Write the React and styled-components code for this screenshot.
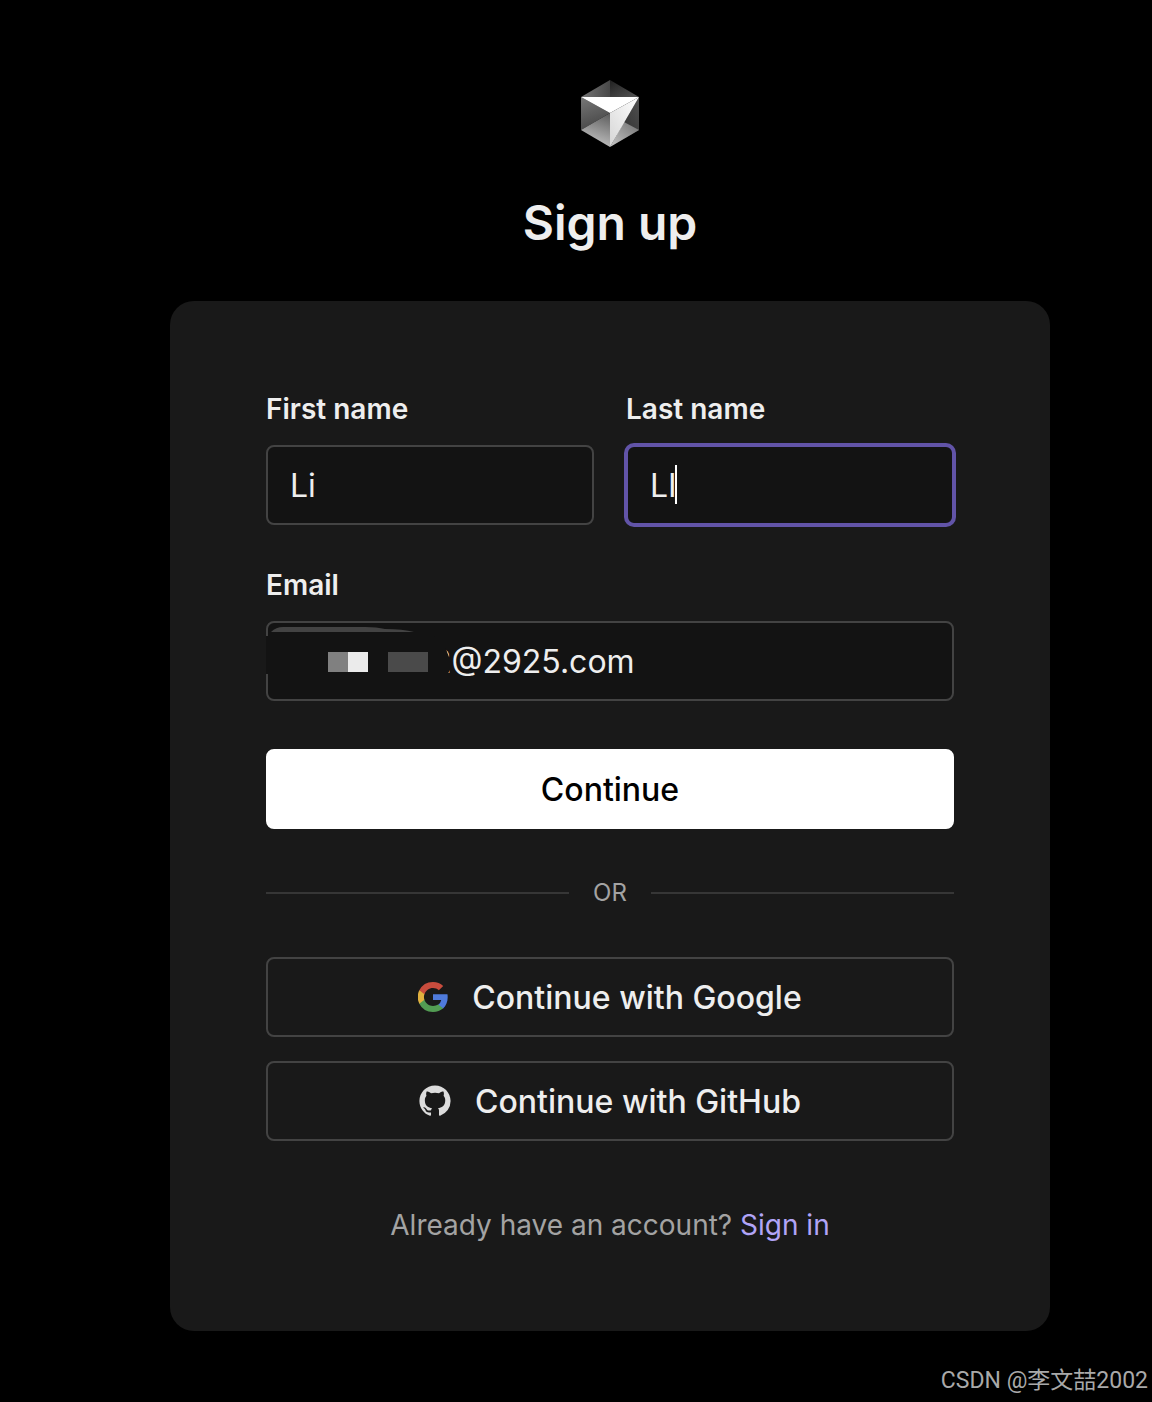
import { useState } from 'react';
import styled, { createGlobalStyle, css } from 'styled-components';

const GlobalStyle = createGlobalStyle`
   * {
      box-sizing: border-box;
   }
   body {
      margin: 0;
      background-color: #000;
      color: #eee;
      font-family: Inter, 'Liberation Sans', sans-serif;
   }
`;

const Page = styled.div`
   display: flex;
   flex-direction: column;
   min-height: 100vh;
`;

const Main = styled.main`
   display: flex;
   flex-direction: column;
   align-items: center;
   flex: 1;
   padding: 80px 32px 0 100px;
`;

const Logo = styled.svg`
   display: block;
   width: 60px;
   height: 68px;
`;

const Title = styled.h1`
   margin: 45px 0 48px;
   font-size: 48px;
   line-height: 60px;
   font-weight: 600;
`;

const Card = styled.section`
   width: 100%;
   max-width: 880px;
   padding: 88px 96px 86px;
   border-radius: 24px;
   background-color: #191919;
`;

const Form = styled.form`
   display: flex;
   flex-direction: column;
   gap: 40px;
`;

const NameRow = styled.div`
   display: grid;
   grid-template-columns: 1fr 1fr;
   gap: 32px;
`;

const Field = styled.div`
   display: flex;
   flex-direction: column;
   gap: 16px;
`;

const Label = styled.label`
   font-size: 28px;
   line-height: 40px;
   font-weight: 600;
`;

const InputWrap = styled.div`
   position: relative;
`;

const focusRing = css`
   border-color: #6254a8;
   box-shadow: 0 0 0 2px #6254a8;
`;

const Input = styled.input`
   display: block;
   width: 100%;
   height: 80px;
   padding: 0 22px;
   padding-left: ${(props) => props.$indent || '22px'};
   border: 2px solid #434343;
   border-radius: 8px;
   outline: none;
   background-color: #131313;
   color: #eee;
   font-family: inherit;
   font-size: 32px;
   caret-color: ${(props) => (props.$active ? 'transparent' : '#fff')};
   ${(props) => props.$active && focusRing}
`;

const Caret = styled.span`
   position: absolute;
   top: 20px;
   left: 49px;
   width: 2px;
   height: 39px;
   background-color: #fff;
`;

const Mask = styled.svg`
   position: absolute;
   top: 0;
   left: 0;
   width: 190px;
   height: 80px;
   pointer-events: none;
`;

const Button = styled.button`
   display: flex;
   align-items: center;
   justify-content: center;
   gap: 24px;
   width: 100%;
   height: 80px;
   padding: 0;
   border: 2px solid #434343;
   border-radius: 8px;
   background-color: transparent;
   color: #eee;
   font-family: inherit;
   font-size: 32px;
   font-weight: 500;
   cursor: pointer;
`;

const SubmitButton = styled(Button)`
   margin-top: 8px;
   border-color: #fff;
   background-color: #fff;
   color: #000;
`;

const Divider = styled.div`
   display: flex;
   align-items: center;
   gap: 24px;
   margin: 48px 0;
   color: #a3a3a3;
   font-size: 24px;
   line-height: 32px;

   &::before,
   &::after {
      content: '';
      flex: 1;
      height: 2px;
      background-color: #363636;
   }
`;

const Providers = styled.div`
   display: flex;
   flex-direction: column;
   gap: 24px;
`;

const ProviderIcon = styled.svg`
   flex: none;
   width: ${(props) => props.$size}px;
   height: ${(props) => props.$size}px;
`;

const SignIn = styled.p`
   margin: 64px 0 0;
   color: #a3a3a3;
   font-size: 28px;
   line-height: 40px;
   text-align: center;
`;

const SignInLink = styled.a`
   color: #b1a4f7;
   text-decoration: none;
`;

const Watermark = styled.footer`
   padding: 0 4px 5px 0;
   color: #a9a9a9;
   font-family: Roboto, 'Noto Sans CJK SC', sans-serif;
   font-size: 23px;
   line-height: 32px;
   text-align: right;
`;

const CubeLogo = () => (
   <Logo viewBox="-1 0 60 68" role="img" aria-label="Cursor">
      <defs>
         <linearGradient id="topLeft" x1="0" y1="0" x2="1" y2="0">
            <stop offset="0" stopColor="#777" />
            <stop offset="1" stopColor="#484848" />
         </linearGradient>
         <linearGradient id="topRight" x1="0" y1="0" x2="1" y2="1">
            <stop offset="0" stopColor="#202020" />
            <stop offset="1" stopColor="#555" />
         </linearGradient>
         <linearGradient id="left" x1="0" y1="0" x2="0.3" y2="1">
            <stop offset="0" stopColor="#777" />
            <stop offset="1" stopColor="#484848" />
         </linearGradient>
         <linearGradient id="bottomLeft" x1="0.8" y1="0" x2="0.5" y2="1">
            <stop offset="0" stopColor="#606060" />
            <stop offset="1" stopColor="#c4c4c4" />
         </linearGradient>
         <linearGradient id="right" x1="0" y1="1" x2="1" y2="0">
            <stop offset="0" stopColor="#222" />
            <stop offset="1" stopColor="#505050" />
         </linearGradient>
         <linearGradient id="bottomRight" x1="1" y1="0" x2="0" y2="1">
            <stop offset="0" stopColor="#707070" />
            <stop offset="1" stopColor="#c8c8c8" />
         </linearGradient>
         <linearGradient id="front" x1="1" y1="0" x2="0" y2="1">
            <stop offset="0" stopColor="#fff" />
            <stop offset="1" stopColor="#d6d6d6" />
         </linearGradient>
      </defs>
      <path d="M0 17 29 0v17z" fill="url(#topLeft)" />
      <path d="M29 0l29 17H29z" fill="url(#topRight)" />
      <path d="M0 17l29 16L0 50z" fill="url(#left)" />
      <path d="M0 50l29-17v34z" fill="url(#bottomLeft)" />
      <path d="M58 17v33L29 67z" fill="url(#right)" />
      <path d="M43 42l15 8-29 17z" fill="url(#bottomRight)" />
      <path d="M58 17 29 67V33z" fill="url(#front)" />
      <path d="M0 17h58L29 33z" fill="#fff" />
   </Logo>
);

const GoogleIcon = () => (
   <ProviderIcon $size={30} viewBox="0 0 24 24" aria-hidden="true">
      <path
         fill="#4f7bdc"
         d="M23.76 12.27c0-.85-.07-1.67-.21-2.46H12v4.64h6.6a5.65 5.65 0 0 1-2.45 3.7v3.01h3.95c2.32-2.13 3.66-5.27 3.66-8.89z"
      />
      <path
         fill="#529c53"
         d="M12 24c3.3 0 6.07-1.08 8.1-2.94l-3.95-3.01c-1.1.73-2.5 1.16-4.15 1.16-3.19 0-5.89-2.12-6.86-4.98H1.06v3.11A12.24 12.24 0 0 0 12 24z"
      />
      <path
         fill="#e0b03f"
         d="M5.14 14.23A7.2 7.2 0 0 1 4.76 12c0-.77.14-1.52.38-2.23V6.66H1.06a11.8 11.8 0 0 0 0 10.68z"
      />
      <path
         fill="#c84c3d"
         d="M12 4.79c1.8 0 3.41.61 4.68 1.8l3.5-3.45C18.06 1.18 15.29 0 12 0A12.24 12.24 0 0 0 1.06 6.66l4.08 3.11C6.11 6.91 8.81 4.79 12 4.79z"
      />
   </ProviderIcon>
);

const GitHubIcon = () => (
   <ProviderIcon $size={32} viewBox="0 0 16 16" aria-hidden="true">
      <path
         fill="#dcdcdc"
         d="M8 .2C3.58.2.2 3.7.2 8c0 3.54 2.29 6.4 5.27 7.39.4.07.55-.17.55-.38 0-.19-.01-.62-.01-1.29-2.01.37-2.53-.49-2.69-.94-.09-.23-.48-.94-.82-1.13-.28-.15-.68-.52-.01-.53.63-.01 1.08.58 1.23.82.72 1.21 1.87.87 2.33.66.07-.52.28-.87.51-1.07-1.78-.2-3.64-.89-3.64-3.95 0-.87.31-1.59.82-2.15-.08-.2-.36-1.02.08-2.12 0 0 .67-.21 2.2.82.64-.18 1.32-.27 2-.27s1.36.09 2 .27c1.53-1.04 2.2-.82 2.2-.82.44 1.1.16 1.92.08 2.12.51.56.82 1.27.82 2.15 0 3.07-1.87 3.75-3.65 3.95.29.25.54.73.54 1.48 0 1.07-.01 1.73-.01 2 0 .21.15.46.55.38A7.81 7.81 0 0 0 15.8 8C15.8 3.7 12.42.2 8 .2z"
      />
   </ProviderIcon>
);

const EmailMask = () => (
   <Mask viewBox="0 0 190 80" aria-hidden="true">
      <path d="M0 15h168l12 13 3 8 3 8-4 9H0z" fill="#131313" />
      <path d="M5 11q5-5 12-5h82q12 0 20 2 18 0 29 3z" fill="#434343" />
      <path d="M62 31h20v20H62z" fill="#808080" />
      <path d="M82 31h20v20H82z" fill="#ebebeb" />
      <path d="M122 31h40v20h-40z" fill="#4a4a4a" />
   </Mask>
);

const App = () => {
   const [firstName, setFirstName] = useState('Li');
   const [lastName, setLastName] = useState('LI');
   const [email, setEmail] = useState('2@2925.com');

   return (
      <Page>
         <GlobalStyle />
         <Main>
            <CubeLogo />
            <Title>Sign up</Title>
            <Card>
               <Form onSubmit={(e) => e.preventDefault()}>
                  <NameRow>
                     <Field>
                        <Label htmlFor="firstName">First name</Label>
                        <Input
                           id="firstName"
                           value={firstName}
                           onChange={(e) => setFirstName(e.target.value)}
                        />
                     </Field>
                     <Field>
                        <Label htmlFor="lastName">Last name</Label>
                        <InputWrap>
                           <Input
                              id="lastName"
                              $active
                              value={lastName}
                              onChange={(e) => setLastName(e.target.value)}
                           />
                           <Caret />
                        </InputWrap>
                     </Field>
                  </NameRow>
                  <Field>
                     <Label htmlFor="email">Email</Label>
                     <InputWrap>
                        <Input
                           id="email"
                           $indent="164px"
                           value={email}
                           onChange={(e) => setEmail(e.target.value)}
                        />
                        <EmailMask />
                     </InputWrap>
                  </Field>
                  <SubmitButton type="submit">Continue</SubmitButton>
               </Form>
               <Divider>OR</Divider>
               <Providers>
                  <Button type="button">
                     <GoogleIcon />
                     Continue with Google
                  </Button>
                  <Button type="button">
                     <GitHubIcon />
                     Continue with GitHub
                  </Button>
               </Providers>
               <SignIn>
                  Already have an account? <SignInLink href="#">Sign in</SignInLink>
               </SignIn>
            </Card>
         </Main>
         <Watermark>CSDN @李文喆2002</Watermark>
      </Page>
   );
};

export default App;
